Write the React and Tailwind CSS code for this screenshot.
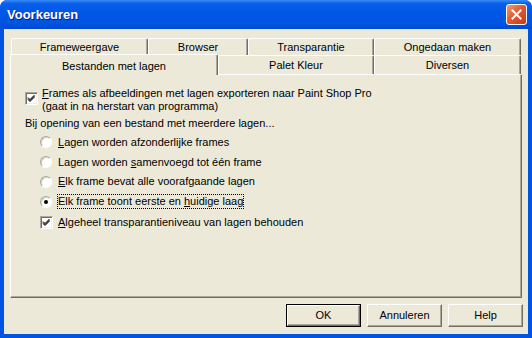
import React from "react";

const font = { fontFamily: '"Liberation Sans", Arial, sans-serif' };

const Check = () => (
  <div className="w-[13px] h-[13px] shrink-0 bg-white border border-t-[#ACA899] border-l-[#ACA899] border-b-white border-r-white shadow-[inset_1px_1px_0_#716F64,inset_-1px_-1px_0_#F1EFE2] flex items-center justify-center">
    <svg width="9" height="9" viewBox="0 0 9 9">
      <path d="M1 3.5 L3 5.5 L7.5 1 M1 4.5 L3 6.5 L7.5 2 M1 5.5 L3 7.5 L7.5 3" stroke="#000" strokeWidth="1" fill="none" />
    </svg>
  </div>
);

const Radio = ({ on }) => (
  <div className="w-[12px] h-[12px] shrink-0 rounded-full bg-white border border-t-[#ACA899] border-l-[#ACA899] border-b-white border-r-white shadow-[inset_1px_1px_0_#D4D0C8] flex items-center justify-center">
    {on && <div className="w-[4px] h-[4px] rounded-full bg-black" />}
  </div>
);

const Tab = ({ w, children, className = "" }) => (
  <div
    className={`shrink-0 h-full flex items-center justify-center border-t border-l border-t-white border-l-white border-r border-r-[#716F64] shadow-[inset_-1px_0_0_#ACA899] rounded-t-[2px] ${className}`}
    style={{ width: w }}
  >
    {children}
  </div>
);

const Button = ({ children, def }) => (
  <div className={`w-[75px] h-[23px] ${def ? "border border-black" : ""}`}>
    <div className="w-full h-full flex items-center justify-center border border-t-white border-l-white border-b-[#716F64] border-r-[#716F64] shadow-[inset_-1px_-1px_0_#ACA899] text-[11px] text-black">
      {children}
    </div>
  </div>
);

export default function App() {
  return (
    <div className="w-[532px] h-[338px] bg-[#0054E3] rounded-t-[7px] flex flex-col overflow-hidden" style={font}>
      <div className="h-[29px] shrink-0 flex items-center justify-between pl-[7px] pr-[5px] rounded-t-[7px] bg-[linear-gradient(to_bottom,#3A8CF5_0%,#0A5FEB_12%,#0058E6_40%,#0054E3_80%,#0049CE_100%)]">
        <span className="text-white font-bold text-[13px] [text-shadow:1px_1px_0_#0A1E80]">Voorkeuren</span>
        <div className="w-[21px] h-[21px] rounded-[3px] border border-white bg-[linear-gradient(135deg,#F09C7C_0%,#E25A34_45%,#C83A14_100%)] flex items-center justify-center">
          <svg width="11" height="11" viewBox="0 0 11 11">
            <path d="M1.5 1.5 L9.5 9.5 M9.5 1.5 L1.5 9.5" stroke="#fff" strokeWidth="2" strokeLinecap="square" />
          </svg>
        </div>
      </div>
      <div className="flex-1 mx-[4px] mb-[4px] bg-[#ECE9D8] flex flex-col text-[11px] text-black">
        <div className="mt-[9px] ml-[7px] h-[17px] flex">
          <Tab w={137}>Frameweergave</Tab>
          <Tab w={100}>Browser</Tab>
          <Tab w={126}>Transparantie</Tab>
          <Tab w={147}>Ongedaan maken</Tab>
        </div>
        <div className="ml-[6px] h-[19px] flex items-end">
          <Tab w={208} className="!h-[21px] -mb-[1px] relative z-10 bg-[#ECE9D8] items-start pt-[3px]">
            Bestanden met lagen
          </Tab>
          <Tab w={156} className="!h-[19px]">Palet Kleur</Tab>
          <Tab w={147} className="!h-[19px]">Diversen</Tab>
        </div>
        <div className="mx-[6px] h-[224px] border border-t-white border-l-white border-b-[#716F64] border-r-[#716F64] shadow-[inset_-1px_-1px_0_#ACA899] pl-[14px] pt-[12px] flex flex-col">
          <div className="flex items-start gap-[4px]">
            <div className="mt-[5px]">
              <Check />
            </div>
            <div className="leading-[13px]">
              <div><u>F</u>rames als afbeeldingen met lagen exporteren naar Paint Shop Pro</div>
              <div>(gaat in na herstart van programma)</div>
            </div>
          </div>
          <div className="mt-[4px] leading-[13px]">Bij opening van een bestand met meerdere lagen...</div>
          <div className="mt-[2px] ml-[15px] flex flex-col">
            <div className="h-[20px] flex items-center gap-[6px]">
              <Radio />
              <span><u>L</u>agen worden afzonderlijke frames</span>
            </div>
            <div className="h-[20px] flex items-center gap-[6px]">
              <Radio />
              <span>Lagen worden <u>s</u>amenvoegd tot één frame</span>
            </div>
            <div className="h-[19px] flex items-center gap-[6px]">
              <Radio />
              <span><u>E</u>lk frame bevat alle voorafgaande lagen</span>
            </div>
            <div className="h-[21px] flex items-center gap-[5px]">
              <Radio on />
              <span className="border border-dotted border-black px-[0px] leading-[13px]">Elk frame toont eerste en <u>h</u>uidige laag</span>
            </div>
            <div className="h-[21px] flex items-center gap-[5px]">
              <Check />
              <span><u>A</u>lgeheel transparantieniveau van lagen behouden</span>
            </div>
          </div>
        </div>
        <div className="mt-[6px] mr-[5px] flex justify-end gap-[6px]">
          <Button def>OK</Button>
          <Button>Annuleren</Button>
          <Button>Help</Button>
        </div>
      </div>
    </div>
  );
}
